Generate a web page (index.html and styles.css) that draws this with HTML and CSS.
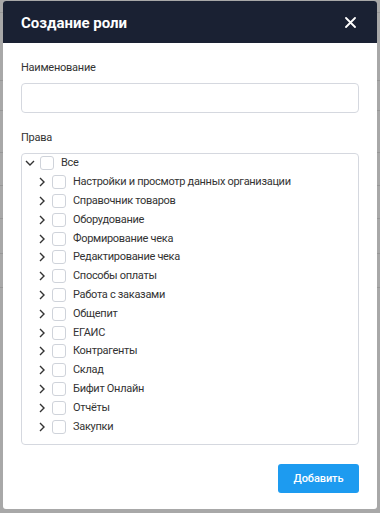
FILE: index.html
```html
<!DOCTYPE html>
<html lang="ru">
<head>
<meta charset="utf-8">
<link rel="stylesheet" href="styles.css">
</head>
<body>
<div class="page">
  <div class="bg-row h12"></div>
  <div class="bg-row h68"></div>
  <div class="bg-row h30"></div>
  <div class="bg-row h42"></div>
  <div class="bg-row h33"></div>
  <div class="bg-row h33"></div>
  <div class="bg-row h35"></div>
  <div class="bg-row h34"></div>
</div>
<div class="modal">
  <div class="modal-header">
    <span class="modal-title">Создание роли</span>
    <svg class="close" width="11" height="11" viewBox="0 0 11 11"><path d="M1 1L10 10M10 1L1 10" stroke="#fff" stroke-width="1.8" stroke-linecap="round"/></svg>
  </div>
  <div class="modal-body">
    <div class="label">Наименование</div>
    <div class="input"></div>
    <div class="label">Права</div>
    <div class="tree">
      <div class="row">
        <span class="chev"><svg width="10" height="6" viewBox="0 0 10 6"><path d="M1 1L5 5L9 1" fill="none" stroke="#333" stroke-width="1.4"/></svg></span>
        <span class="cb"></span><span class="txt">Все</span>
      </div>
      <div class="row child"><span class="chev"><svg width="6" height="10" viewBox="0 0 6 10"><path d="M1 1L5 5L1 9" fill="none" stroke="#333" stroke-width="1.4"/></svg></span><span class="cb"></span><span class="txt">Настройки и просмотр данных организации</span></div>
      <div class="row child"><span class="chev"><svg width="6" height="10" viewBox="0 0 6 10"><path d="M1 1L5 5L1 9" fill="none" stroke="#333" stroke-width="1.4"/></svg></span><span class="cb"></span><span class="txt">Справочник товаров</span></div>
      <div class="row child"><span class="chev"><svg width="6" height="10" viewBox="0 0 6 10"><path d="M1 1L5 5L1 9" fill="none" stroke="#333" stroke-width="1.4"/></svg></span><span class="cb"></span><span class="txt">Оборудование</span></div>
      <div class="row child"><span class="chev"><svg width="6" height="10" viewBox="0 0 6 10"><path d="M1 1L5 5L1 9" fill="none" stroke="#333" stroke-width="1.4"/></svg></span><span class="cb"></span><span class="txt">Формирование чека</span></div>
      <div class="row child"><span class="chev"><svg width="6" height="10" viewBox="0 0 6 10"><path d="M1 1L5 5L1 9" fill="none" stroke="#333" stroke-width="1.4"/></svg></span><span class="cb"></span><span class="txt">Редактирование чека</span></div>
      <div class="row child"><span class="chev"><svg width="6" height="10" viewBox="0 0 6 10"><path d="M1 1L5 5L1 9" fill="none" stroke="#333" stroke-width="1.4"/></svg></span><span class="cb"></span><span class="txt">Способы оплаты</span></div>
      <div class="row child"><span class="chev"><svg width="6" height="10" viewBox="0 0 6 10"><path d="M1 1L5 5L1 9" fill="none" stroke="#333" stroke-width="1.4"/></svg></span><span class="cb"></span><span class="txt">Работа с заказами</span></div>
      <div class="row child"><span class="chev"><svg width="6" height="10" viewBox="0 0 6 10"><path d="M1 1L5 5L1 9" fill="none" stroke="#333" stroke-width="1.4"/></svg></span><span class="cb"></span><span class="txt">Общепит</span></div>
      <div class="row child"><span class="chev"><svg width="6" height="10" viewBox="0 0 6 10"><path d="M1 1L5 5L1 9" fill="none" stroke="#333" stroke-width="1.4"/></svg></span><span class="cb"></span><span class="txt">ЕГАИС</span></div>
      <div class="row child"><span class="chev"><svg width="6" height="10" viewBox="0 0 6 10"><path d="M1 1L5 5L1 9" fill="none" stroke="#333" stroke-width="1.4"/></svg></span><span class="cb"></span><span class="txt">Контрагенты</span></div>
      <div class="row child"><span class="chev"><svg width="6" height="10" viewBox="0 0 6 10"><path d="M1 1L5 5L1 9" fill="none" stroke="#333" stroke-width="1.4"/></svg></span><span class="cb"></span><span class="txt">Склад</span></div>
      <div class="row child"><span class="chev"><svg width="6" height="10" viewBox="0 0 6 10"><path d="M1 1L5 5L1 9" fill="none" stroke="#333" stroke-width="1.4"/></svg></span><span class="cb"></span><span class="txt">Бифит Онлайн</span></div>
      <div class="row child"><span class="chev"><svg width="6" height="10" viewBox="0 0 6 10"><path d="M1 1L5 5L1 9" fill="none" stroke="#333" stroke-width="1.4"/></svg></span><span class="cb"></span><span class="txt">Отчёты</span></div>
      <div class="row child"><span class="chev"><svg width="6" height="10" viewBox="0 0 6 10"><path d="M1 1L5 5L1 9" fill="none" stroke="#333" stroke-width="1.4"/></svg></span><span class="cb"></span><span class="txt">Закупки</span></div>
    </div>
    <div class="actions">
      <button class="btn">Добавить</button>
    </div>
  </div>
</div>
</body>
</html>
```
FILE: styles.css
```css
html, body {
  margin: 0;
  padding: 0;
  height: 100%;
}
body {
  background: #a8a8a8;
  font-family: Roboto, "Liberation Sans", sans-serif;
  color: #333;
  position: relative;
  overflow: hidden;
}
.page {
  display: flex;
  flex-direction: column;
}
.bg-row {
  border-bottom: 1px solid #979797;
  box-sizing: border-box;
}
.h12 { height: 13px; }
.h68 { height: 68px; }
.h30 { height: 30px; }
.h42 { height: 42px; }
.h33 { height: 33px; }
.h35 { height: 35px; }
.h34 { height: 34px; }

.modal {
  position: absolute;
  left: 3px;
  top: 1px;
  width: 374px;
  height: 508px;
  background: #fff;
  border-radius: 3px;
  overflow: hidden;
  display: flex;
  flex-direction: column;
}
.modal-header {
  height: 42px;
  flex: none;
  background: #1a2133;
  display: flex;
  align-items: center;
  justify-content: space-between;
  padding: 0 21px 0 18px;
}
.modal-title {
  color: #fff;
  font-weight: 700;
  font-size: 15px;
  line-height: 20px;
  padding-top: 1px;
}
.close {
  display: block;
  margin-top: 1px;
}
.modal-body {
  padding: 18px 18px 16px;
  display: flex;
  flex-direction: column;
}
.label {
  font-size: 11px;
  letter-spacing: -0.25px;
  line-height: 14px;
  margin-bottom: 8px;
  color: #333;
}
.input {
  height: 30px;
  box-sizing: border-box;
  border: 1px solid #d5d8df;
  border-radius: 4px;
  margin-bottom: 18px;
}
.tree {
  height: 292px;
  box-sizing: border-box;
  border: 1px solid #d5d8df;
  border-radius: 4px;
  display: flex;
  flex-direction: column;
}
.row {
  height: 18.8px;
  display: flex;
  align-items: center;
  font-size: 11px;
  letter-spacing: -0.3px;
  line-height: 14px;
}
.row.child {
  padding-left: 12px;
}
.chev {
  width: 16px;
  display: flex;
  justify-content: center;
  align-items: center;
}
.chev svg { display: block; }
.cb {
  width: 14px;
  height: 14px;
  box-sizing: border-box;
  border: 1px solid #cfd3da;
  border-radius: 3px;
  margin-left: 2px;
  background: #fff;
}
.txt {
  margin-left: 7px;
  white-space: nowrap;
}
.actions {
  margin-top: 19px;
  display: flex;
  justify-content: flex-end;
}
.btn {
  width: 81px;
  height: 29px;
  border: none;
  border-radius: 3px;
  background: #1d9bf0;
  color: #fff;
  font-family: Roboto, "Liberation Sans", sans-serif;
  font-size: 11px;
  font-weight: 500;
  letter-spacing: -0.1px;
  padding: 0;
}
```
